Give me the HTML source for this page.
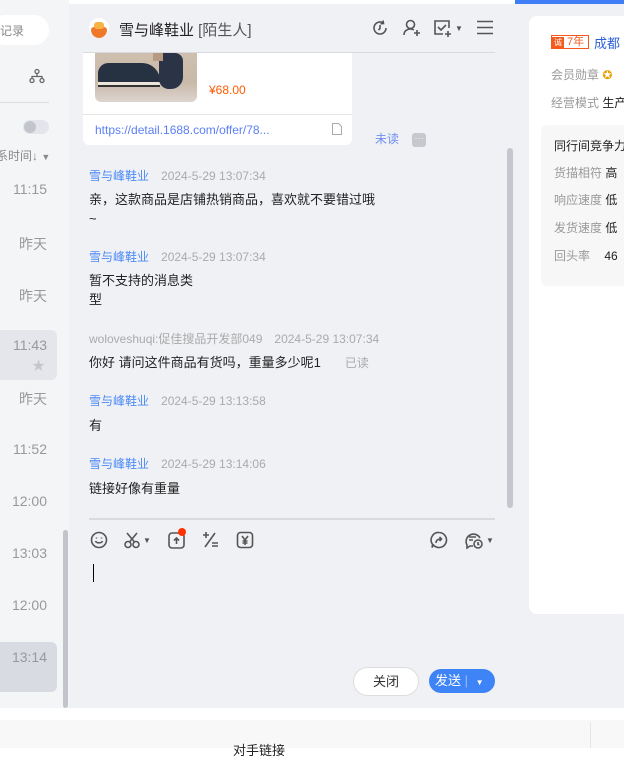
<!DOCTYPE html>
<html><head><meta charset="utf-8"><style>
*{margin:0;padding:0;box-sizing:border-box}
body{width:624px;height:748px;overflow:hidden;position:relative;background:#fff;font-family:"Liberation Sans","Noto Sans CJK SC",sans-serif;font-size:13px;color:#222}
.abs{position:absolute;white-space:nowrap}
.left{left:0;top:0;width:69px;height:708px;background:#f4f5f7}
.t{position:absolute;right:22px;font-size:14px;color:#999;text-align:right}
.chat{left:69px;top:4px;width:446px;height:704px;background:#f0f1f5}
.name{color:#4b8af5;font-size:12px}
.time{color:#aaa;font-size:12px;margin-left:8px}
.msg{position:absolute;left:89px;font-size:13px;color:#222;line-height:19px;white-space:nowrap}
.ic{position:absolute;stroke:#555;fill:none;stroke-width:1.6}
</style></head><body>
<div class="abs left">
  <div class="abs" style="left:-10px;top:15px;width:59px;height:30px;background:#fff;border-radius:15px;font-size:12px;color:#888;padding:7px 0 0 10px">记录</div>
  <svg class="abs" style="left:29px;top:68px" width="16" height="16" viewBox="0 0 16 16" fill="none" stroke="#666" stroke-width="1.3"><circle cx="8" cy="3.5" r="2"/><circle cx="3" cy="12.5" r="2"/><circle cx="13" cy="12.5" r="2"/><path d="M8 5.5v3M3 10.5V8.5h10v2"/></svg>
  <div class="abs" style="left:0;top:102px;width:49px;height:1px;background:#ddd"></div>
  <div class="abs" style="left:23px;top:120px;width:26px;height:14px;border-radius:7px;background:#e3e5ea"><div style="width:12px;height:12px;margin:1px;border-radius:6px;background:#c2c5cc"></div></div>
  <div class="abs" style="left:-4px;top:147px;font-size:12px;color:#888">系时间↓ <span style="font-size:9px">▼</span></div>
  <div class="t" style="top:181px">11:15</div>
  <div class="t" style="top:234px">昨天</div>
  <div class="t" style="top:286px">昨天</div>
  <div class="abs" style="left:0;top:330px;width:57px;height:50px;background:#e4e6ec;border-radius:0 6px 6px 0"></div>
  <div class="t" style="top:337px">11:43</div>
  <div class="abs" style="left:32px;top:355px;color:#c4c6cc;font-size:13px">★</div>
  <div class="t" style="top:389px">昨天</div>
  <div class="t" style="top:441px">11:52</div>
  <div class="t" style="top:493px">12:00</div>
  <div class="t" style="top:545px">13:03</div>
  <div class="t" style="top:597px">12:00</div>
  <div class="abs" style="left:0;top:642px;width:57px;height:50px;background:#d8dbe2;border-radius:0 6px 6px 0"></div>
  <div class="t" style="top:649px">13:14</div>
  <div class="abs" style="left:63px;top:530px;width:5px;height:178px;background:#c1c4ca;border-radius:3px"></div>
</div>

<div class="abs chat"></div>
<div class="abs" style="left:89px;top:18px;width:20px;height:20px;border-radius:10px;background:#fff;overflow:hidden"><div style="margin:9px 0 0 2px;width:16px;height:11px;background:#f0782a;border-radius:3px 3px 8px 8px"></div><div class="abs" style="left:5px;top:4px;width:10px;height:7px;background:#f7b444;border-radius:3px"></div></div>
<div class="abs" style="left:119px;top:19px;font-size:15px;color:#222">雪与峰鞋业 <span style="color:#555">[陌生人]</span></div>
<svg class="ic" style="left:371px;top:19px" width="18" height="18" viewBox="0 0 18 18"><path d="M15 9a6 6 0 1 1-3-5.2"/><path d="M12 1.5l.5 3-3 .3"/><path d="M9 6v3.5l-1.5 1.5"/></svg>
<svg class="ic" style="left:402px;top:18px" width="19" height="19" viewBox="0 0 19 19"><circle cx="8.5" cy="6.5" r="4"/><path d="M2 17c0-4 3-6 6.5-6 1.5 0 2.5.4 3.3 1"/><path d="M15 12v6M12 15h6"/></svg>
<svg class="ic" style="left:433px;top:19px" width="20" height="18" viewBox="0 0 20 18"><path d="M10 15H2V2h14v7"/><path d="M5 8l3 3 5-5"/><path d="M15 12v6M12 15h6"/></svg>
<div class="abs" style="left:455px;top:24px;font-size:8px;color:#555">▼</div>
<svg class="ic" style="left:477px;top:20px" width="16" height="15" viewBox="0 0 16 15"><path d="M0 1.5h16M0 7.5h16M0 13.5h16"/></svg>
<div class="abs" style="left:83px;top:52px;width:412px;height:1px;background:#d9dadd"></div>

<div class="abs" style="left:83px;top:53px;width:269px;height:92px;background:#fff;border-radius:0 0 6px 6px;overflow:hidden">
  <div class="abs" style="left:12px;top:0;width:102px;height:49px;border-radius:0 0 6px 6px;overflow:hidden;background:linear-gradient(180deg,#cfbfae 0%,#c9b9a9 60%,#dcd4d0 100%)">
    <div class="abs" style="left:3px;top:10px;width:62px;height:20px;background:#263142;border-radius:14px 24px 3px 3px"></div>
    <div class="abs" style="left:3px;top:29px;width:62px;height:3px;background:#ebe5da"></div>
    <div class="abs" style="left:3px;top:32px;width:62px;height:2px;background:#333"></div>
    <div class="abs" style="left:64px;top:0;width:24px;height:36px;background:#2b3446;border-radius:2px 8px 12px 10px"></div>
    <div class="abs" style="left:58px;top:0;width:10px;height:8px;background:#b89a82"></div>
  </div>
  <div class="abs" style="left:126px;top:30px;color:#ff5a00;font-size:12px">¥68.00</div>
  <div class="abs" style="left:0;top:61px;width:269px;height:1px;background:#e5e5e5"></div>
  <div class="abs" style="left:12px;top:70px;color:#5b7ff5;font-size:12px">https://detail.1688.com/offer/78...</div>
  <svg class="abs" style="left:249px;top:70px" width="10" height="12" viewBox="0 0 10 12" fill="none" stroke="#aaa"><path d="M.5.5h6l3 3v8H.5z"/></svg>
</div>
<div class="abs" style="left:375px;top:130px;color:#6a8ef5;font-size:12px">未读</div>
<div class="abs" style="left:412px;top:133px;width:14px;height:14px;border-radius:3px;background:#c6c8ce;color:#fff;font-size:9px;text-align:center;line-height:10px">···</div>
<div class="abs" style="left:507px;top:148px;width:6px;height:360px;background:#c4c7cd;border-radius:3px"></div>

<div class="msg" style="top:166px"><span class="name">雪与峰鞋业</span><span class="time" style="margin-left:12px">2024-5-29 13:07:34</span></div>
<div class="msg" style="top:190px">亲，这款商品是店铺热销商品，喜欢就不要错过哦<br>~</div>
<div class="msg" style="top:247px"><span class="name">雪与峰鞋业</span><span class="time" style="margin-left:12px">2024-5-29 13:07:34</span></div>
<div class="msg" style="top:271px">暂不支持的消息类<br>型</div>
<div class="msg" style="top:329px"><span style="color:#aaa;font-size:12px">woloveshuqi:促佳搜品开发部049</span><span class="time" style="margin-left:12px">2024-5-29 13:07:34</span></div>
<div class="msg" style="top:353px">你好 请问这件商品有货吗，重量多少呢1<span style="color:#aaa;font-size:12px;margin-left:24px">已读</span></div>
<div class="msg" style="top:391px"><span class="name">雪与峰鞋业</span><span class="time" style="margin-left:12px">2024-5-29 13:13:58</span></div>
<div class="msg" style="top:416px">有</div>
<div class="msg" style="top:454px"><span class="name">雪与峰鞋业</span><span class="time" style="margin-left:12px">2024-5-29 13:14:06</span></div>
<div class="msg" style="top:479px">链接好像有重量</div>

<div class="abs" style="left:89px;top:518px;width:406px;height:2px;background:#d9dadd"></div>
<svg class="ic" style="left:90px;top:531px" width="18" height="18" viewBox="0 0 18 18"><circle cx="9" cy="9" r="7.5"/><path d="M5.5 10c1 2.5 6 2.5 7 0M6.5 6.5v1M11.5 6.5v1"/></svg>
<svg class="ic" style="left:124px;top:531px" width="18" height="18" viewBox="0 0 18 18"><circle cx="4" cy="13.5" r="3"/><circle cx="12" cy="13.5" r="3"/><path d="M5.5 11L13 2M10.5 11L3 2"/></svg>
<div class="abs" style="left:143px;top:536px;font-size:8px;color:#555">▼</div>
<svg class="ic" style="left:168px;top:531px" width="18" height="18" viewBox="0 0 18 18"><rect x="1" y="2" width="15" height="15" rx="3"/><path d="M8.5 13V7M6 9.5l2.5-2.5 2.5 2.5"/></svg>
<div class="abs" style="left:178px;top:528px;width:8px;height:8px;border-radius:4px;background:#f30"></div>
<svg class="ic" style="left:202px;top:531px" width="18" height="18" viewBox="0 0 18 18"><path d="M1 4h6M4 1v6M13 2L3 16M10 12h6M10 15h6"/></svg>
<svg class="ic" style="left:236px;top:531px" width="18" height="18" viewBox="0 0 18 18"><rect x="1.5" y="1.5" width="15" height="15" rx="3"/><path d="M6 5l3 4 3-4M9 9v5M6.5 10h5M6.5 12h5"/></svg>
<svg class="ic" style="left:430px;top:531px" width="18" height="18" viewBox="0 0 18 18"><path d="M9 1.5a7.5 7.5 0 1 1-5.5 12.6L2 16.5l.6-3A7.5 7.5 0 0 1 9 1.5z"/><path d="M6 12c0-3 2-4 5-4M9.5 6l2 2-2 2"/></svg>
<svg class="ic" style="left:464px;top:531px" width="20" height="19" viewBox="0 0 20 19"><path d="M9 15H6l-3 2v-3A7 7 0 1 1 16 7"/><path d="M5 6h7M5 9h4"/><circle cx="14" cy="13" r="4"/><path d="M14 11v2.5h1.5"/></svg>
<div class="abs" style="left:486px;top:536px;font-size:8px;color:#555">▼</div>
<div class="abs" style="left:93px;top:564px;width:1px;height:18px;background:#000"></div>

<div class="abs" style="left:353px;top:667px;width:66px;height:29px;border-radius:15px;background:#fff;border:1px solid #ddd;text-align:center;line-height:27px;font-size:13px;color:#333">关闭</div>
<div class="abs" style="left:429px;top:669px;width:66px;height:24px;border-radius:12px;background:#3f84f7;color:#fff;font-size:13px;line-height:24px;padding-left:6px">发送 <span style="color:#9bbdf9">|</span> <span style="font-size:8px;margin-left:4px">▼</span></div>

<div class="abs" style="left:0;top:708px;width:624px;height:12px;background:#fff"></div>
<div class="abs" style="left:0;top:720px;width:624px;height:28px;background:#f8f8f9"></div>
<div class="abs" style="left:233px;top:740px;font-size:13px;color:#222">对手链接</div>
<div class="abs" style="left:590px;top:722px;width:1px;height:26px;background:#e5e5e5"></div>

<div class="abs" style="left:515px;top:0;width:109px;height:4px;background:#3f7ef6"></div>
<div class="abs" style="left:515px;top:4px;width:109px;height:704px;background:#f0f1f5"></div>
<div class="abs" style="left:529px;top:16px;width:100px;height:598px;background:#fff;border-radius:8px"></div>
<div class="abs" style="left:551px;top:35px;width:38px;height:14px;border:1px solid #f35a1c;font-size:11px;line-height:12px;color:#f35a1c"><span style="display:inline-block;width:12px;height:12px;background:#f35a1c;color:#fff;font-size:8px;text-align:center">诚</span> 7年</div>
<div class="abs" style="left:594px;top:33px;font-size:13px;color:#2d5fd8">成都</div>
<div class="abs" style="left:551px;top:66px;font-size:12px;color:#999">会员勋章 <span style="color:#e8a000">✪</span></div>
<div class="abs" style="left:551px;top:94px;font-size:12px;color:#999">经营模式 <span style="color:#222">生产</span></div>
<div class="abs" style="left:541px;top:125px;width:90px;height:161px;background:#f7f7f8;border-radius:6px"></div>
<div class="abs" style="left:554px;top:137px;font-size:12px;color:#222">同行间竞争力</div>
<div class="abs" style="left:554px;top:164px;font-size:12px;color:#999">货描相符 <span style="color:#222">高</span></div>
<div class="abs" style="left:554px;top:191px;font-size:12px;color:#999">响应速度 <span style="color:#222">低</span></div>
<div class="abs" style="left:554px;top:219px;font-size:12px;color:#999">发货速度 <span style="color:#222">低</span></div>
<div class="abs" style="left:554px;top:247px;font-size:12px;color:#999">回头率 <span style="color:#222;margin-left:11px">46</span></div>
</body></html>
